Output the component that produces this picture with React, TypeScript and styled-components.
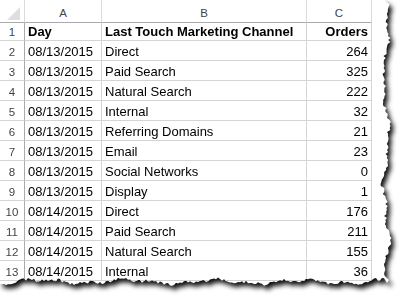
import React from "react";
import styled, { createGlobalStyle } from "styled-components";

const Global = createGlobalStyle`
  html, body { margin: 0; padding: 0; background: #ffffff; }
  body {
    width: 403px;
    height: 300px;
    overflow: hidden;
    font-family: "Liberation Sans", Arial, sans-serif;
  }
`;

function makeRng(seed: number) {
  let a = seed >>> 0;
  return () => {
    a = (a + 0x6d2b79f5) >>> 0;
    let t = a;
    t = Math.imul(t ^ (t >>> 15), t | 1);
    t ^= t + Math.imul(t ^ (t >>> 7), t | 61);
    return ((t ^ (t >>> 14)) >>> 0) / 4294967296;
  };
}

function tornPolygon(): string {
  const r = makeRng(7);
  const pts: string[] = ["0px 0px"];
  for (let y = 0; y <= 276; y += 2) {
    const x =
      386 +
      2.4 * Math.sin(y / 17) +
      1.5 * Math.sin(y / 6.3 + 1) +
      (r() - 0.5) * 3.4;
    pts.push(`${x.toFixed(1)}px ${y}px`);
  }
  pts.push("389px 280px", "387px 283px");
  for (let x = 384; x >= 0; x -= 2) {
    const y =
      281.5 +
      1.8 * Math.sin(x / 14 + 2) +
      1.2 * Math.sin(x / 5.1) +
      (r() - 0.5) * 3.2;
    pts.push(`${x}px ${y.toFixed(1)}px`);
  }
  pts.push("0px 282px");
  return pts.join(", ");
}

const TORN = tornPolygon();

const Page = styled.div`
  width: 403px;
  height: 300px;
  filter: drop-shadow(3px 4px 2.5px rgba(0, 0, 0, 0.95));
`;

const Paper = styled.div<{ $clip: string }>`
  width: 396px;
  height: 292px;
  background: #ffffff;
  clip-path: polygon(${(p) => p.$clip});
`;

const Sheet = styled.div`
  display: grid;
  grid-template-columns: 25px 77px 205px 65px;
  grid-template-rows: 23px 18px repeat(12, 20px);
  width: 372px;
`;

const Corner = styled.div`
  display: flex;
  justify-content: flex-end;
  align-items: flex-end;
  padding: 0 4px 2px 0;
  border-right: 1px solid #dadada;
  border-bottom: 1px solid #ababab;
`;

const CornerMark = styled.div`
  width: 13px;
  height: 13px;
  background: #dfdfdf;
  clip-path: polygon(100% 0, 100% 100%, 0 100%);
`;

const ColHead = styled.div`
  display: flex;
  align-items: flex-end;
  justify-content: center;
  padding-bottom: 2px;
  font-size: 11.5px;
  line-height: 13px;
  color: #444444;
  border-right: 1px solid #dadada;
  border-bottom: 1px solid #ababab;
`;

const RowHead = styled.div`
  display: flex;
  align-items: flex-end;
  justify-content: center;
  padding-bottom: 1px;
  font-size: 11.5px;
  line-height: 13px;
  color: #444444;
  border-right: 1px solid #ababab;
  border-bottom: 1px solid #d4d4d4;
`;

const Cell = styled.div<{ $right?: boolean; $bold?: boolean }>`
  display: flex;
  align-items: flex-end;
  justify-content: ${(p) => (p.$right ? "flex-end" : "flex-start")};
  padding: 0 3px 1px 3px;
  font-size: 13px;
  line-height: 15px;
  font-weight: ${(p) => (p.$bold ? 700 : 400)};
  color: #000000;
  white-space: nowrap;
  overflow: hidden;
  border-right: 1px solid #d4d4d4;
  border-bottom: 1px solid #d4d4d4;
`;

const rows: [string, string, number][] = [
  ["08/13/2015", "Direct", 264],
  ["08/13/2015", "Paid Search", 325],
  ["08/13/2015", "Natural Search", 222],
  ["08/13/2015", "Internal", 32],
  ["08/13/2015", "Referring Domains", 21],
  ["08/13/2015", "Email", 23],
  ["08/13/2015", "Social Networks", 0],
  ["08/13/2015", "Display", 1],
  ["08/14/2015", "Direct", 176],
  ["08/14/2015", "Paid Search", 211],
  ["08/14/2015", "Natural Search", 155],
  ["08/14/2015", "Internal", 36],
];

export default function App() {
  return (
    <>
      <Global />
      <Page>
        <Paper $clip={TORN}>
          <Sheet>
            <Corner>
              <CornerMark />
            </Corner>
            <ColHead>A</ColHead>
            <ColHead>B</ColHead>
            <ColHead>C</ColHead>

            <RowHead>1</RowHead>
            <Cell $bold>Day</Cell>
            <Cell $bold>Last Touch Marketing Channel</Cell>
            <Cell $bold $right>
              Orders
            </Cell>

            {rows.map(([day, channel, orders], i) => (
              <React.Fragment key={i}>
                <RowHead>{i + 2}</RowHead>
                <Cell>{day}</Cell>
                <Cell>{channel}</Cell>
                <Cell $right>{orders}</Cell>
              </React.Fragment>
            ))}
          </Sheet>
        </Paper>
      </Page>
    </>
  );
}
